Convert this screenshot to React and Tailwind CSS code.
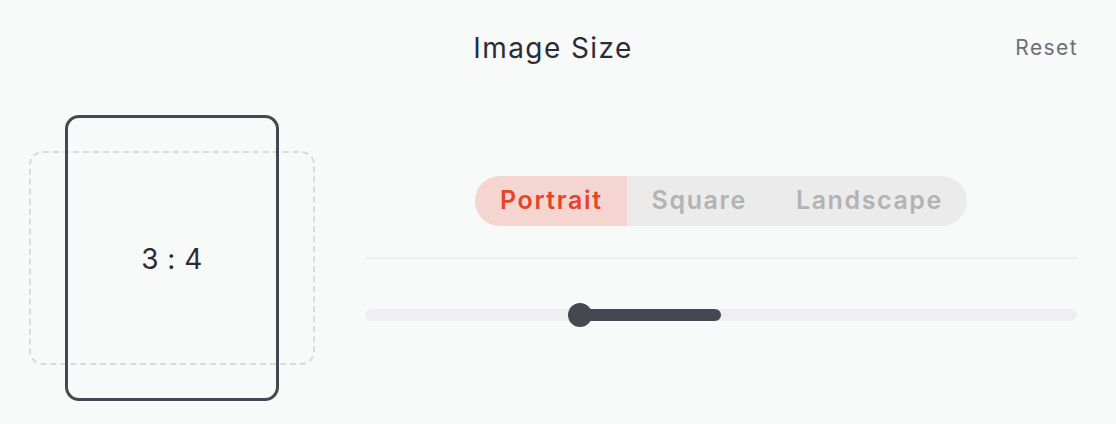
export default function App() {
  const options = [
    { id: "portrait", label: "Portrait" },
    { id: "square", label: "Square" },
    { id: "landscape", label: "Landscape" },
  ];
  const active = "portrait";

  return (
    <div className="w-[1116px] h-[424px] bg-[#f8f9f9] font-['Inter','Noto_Sans',sans-serif] overflow-hidden">
      {/* Header */}
      <div className="grid grid-cols-[1fr_auto_1fr] items-center pl-[29px] pr-[39px] pt-[31px]">
        <div />
        <h1 className="text-[28px] leading-[34px] text-[#2b2c33] tracking-[1.4px]">Image Size</h1>
        <button className="justify-self-end text-[21px] leading-[34px] text-[#6e6f75] tracking-[1.4px] -mr-[1px]">Reset</button>
      </div>

      {/* Body */}
      <div className="flex pl-[29px] pr-[39px] mt-[50px] gap-[50px]">
        {/* Preview */}
        <div className="grid w-[286px] h-[286px] place-items-center">
          <div className="col-start-1 row-start-1 w-[286px] h-[214px] rounded-[14px] border-2 border-dashed border-[#d9dadf]" />
          <div className="col-start-1 row-start-1 w-[214px] h-[286px] rounded-[14px] border-[3px] border-[#474751] flex items-center justify-center">
            <span className="text-[28px] text-[#2b2c33] mt-[2px] tracking-[0.5px]">3 : 4</span>
          </div>
        </div>

        {/* Controls */}
        <div className="flex-1 flex flex-col pt-[61px]">
          <div className="flex justify-center">
            <div className="flex h-[50px] rounded-full bg-[#ebebeb] overflow-hidden">
              {options.map(o => (
                <button key={o.id}
                  className={`pl-[25px] pr-[24px] text-[25px] font-semibold tracking-[1.6px] ${active === o.id ? "bg-[#f5d5cf] text-[#e5432a]" : "text-[#b3b3b3]"}`}>
                  {o.label}
                </button>
              ))}
            </div>
          </div>

          <div className="mt-[31px] h-[2px] bg-[#efefef]" />

          <div className="relative mt-[44px] h-[24px] flex items-center">
            <div className="w-full h-[12px] rounded-full bg-[#efeff1]" />
            <div className="absolute left-[215px] top-[6px] w-[141px] h-[12px] rounded-full bg-[#474752]" />
            <div className="absolute left-[203px] top-0 w-[24px] h-[24px] rounded-full bg-[#474752]" />
          </div>
        </div>
      </div>
    </div>
  );
}
